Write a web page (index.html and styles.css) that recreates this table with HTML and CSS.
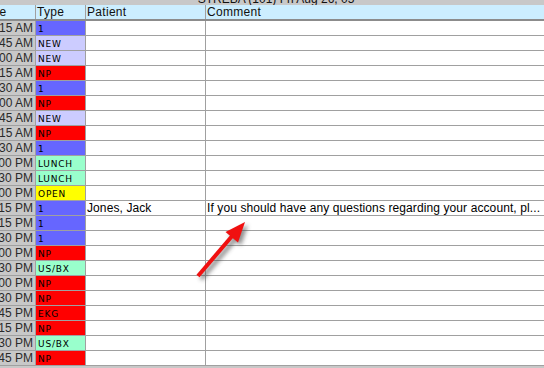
FILE: index.html
```html
<!DOCTYPE html>
<html>
<head>
<meta charset="utf-8">
<link rel="stylesheet" href="styles.css">
</head>
<body>
<div class="screen">
  <div class="title"><span>STREBA (101) Fri Aug 26, 05</span></div>
  <div class="table">
    <div class="row head">
      <div class="c time-h">Time</div>
      <div class="c">Type</div>
      <div class="c">Patient</div>
      <div class="c">Comment</div>
    </div>
    <div class="row"><div class="c time"><span>8:15 AM</span></div><div class="c type t-one">1</div><div class="c"></div><div class="c"></div></div>
    <div class="row"><div class="c time"><span>8:45 AM</span></div><div class="c type t-new">NEW</div><div class="c"></div><div class="c"></div></div>
    <div class="row"><div class="c time"><span>9:00 AM</span></div><div class="c type t-new">NEW</div><div class="c"></div><div class="c"></div></div>
    <div class="row"><div class="c time"><span>9:15 AM</span></div><div class="c type t-np">NP</div><div class="c"></div><div class="c"></div></div>
    <div class="row"><div class="c time"><span>9:30 AM</span></div><div class="c type t-one">1</div><div class="c"></div><div class="c"></div></div>
    <div class="row"><div class="c time"><span>10:00 AM</span></div><div class="c type t-np">NP</div><div class="c"></div><div class="c"></div></div>
    <div class="row"><div class="c time"><span>10:45 AM</span></div><div class="c type t-new">NEW</div><div class="c"></div><div class="c"></div></div>
    <div class="row"><div class="c time"><span>11:15 AM</span></div><div class="c type t-np">NP</div><div class="c"></div><div class="c"></div></div>
    <div class="row"><div class="c time"><span>11:30 AM</span></div><div class="c type t-one">1</div><div class="c"></div><div class="c"></div></div>
    <div class="row"><div class="c time"><span>12:00 PM</span></div><div class="c type t-lunch">LUNCH</div><div class="c"></div><div class="c"></div></div>
    <div class="row"><div class="c time"><span>12:30 PM</span></div><div class="c type t-lunch">LUNCH</div><div class="c"></div><div class="c"></div></div>
    <div class="row"><div class="c time"><span>1:00 PM</span></div><div class="c type t-open">OPEN</div><div class="c"></div><div class="c"></div></div>
    <div class="row"><div class="c time"><span>1:15 PM</span></div><div class="c type t-one">1</div><div class="c data">Jones, Jack</div><div class="c data">If you should have any questions regarding your account, pl...</div></div>
    <div class="row"><div class="c time"><span>2:15 PM</span></div><div class="c type t-one">1</div><div class="c"></div><div class="c"></div></div>
    <div class="row"><div class="c time"><span>2:30 PM</span></div><div class="c type t-one">1</div><div class="c"></div><div class="c"></div></div>
    <div class="row"><div class="c time"><span>3:00 PM</span></div><div class="c type t-np">NP</div><div class="c"></div><div class="c"></div></div>
    <div class="row"><div class="c time"><span>3:30 PM</span></div><div class="c type t-lunch">US/BX</div><div class="c"></div><div class="c"></div></div>
    <div class="row"><div class="c time"><span>4:00 PM</span></div><div class="c type t-np">NP</div><div class="c"></div><div class="c"></div></div>
    <div class="row"><div class="c time"><span>4:30 PM</span></div><div class="c type t-np">NP</div><div class="c"></div><div class="c"></div></div>
    <div class="row"><div class="c time"><span>4:45 PM</span></div><div class="c type t-np">EKG</div><div class="c"></div><div class="c"></div></div>
    <div class="row"><div class="c time"><span>5:15 PM</span></div><div class="c type t-np">NP</div><div class="c"></div><div class="c"></div></div>
    <div class="row"><div class="c time"><span>5:30 PM</span></div><div class="c type t-lunch">US/BX</div><div class="c"></div><div class="c"></div></div>
    <div class="row"><div class="c time"><span>5:45 PM</span></div><div class="c type t-np">NP</div><div class="c"></div><div class="c"></div></div>
  </div>
  <svg class="arrow" width="544" height="368" viewBox="0 0 544 368">
    <defs>
      <filter id="blur" x="-20%" y="-20%" width="140%" height="140%">
        <feGaussianBlur stdDeviation="2"/>
      </filter>
    </defs>
    <g transform="translate(3,3)" fill="#444" stroke="#444" opacity="0.6" filter="url(#blur)">
      <line x1="198" y1="276" x2="233" y2="235" stroke-width="4.5"/>
      <polygon points="245,222 238,242.5 225.5,232" stroke="none"/>
    </g>
    <g fill="#f01010" stroke="#f01010">
      <line x1="198" y1="276" x2="233" y2="235" stroke-width="4"/>
      <polygon points="245,222 238,242.5 225.5,232" stroke="none"/>
    </g>
  </svg>
</div>
</body>
</html>
```
FILE: styles.css
```css
html, body {
  margin: 0;
  padding: 0;
}
body {
  background: #c8c8c8;
  font-family: "Liberation Sans", Arial, sans-serif;
  font-size: 12px;
  color: #000;
}
.screen {
  position: relative;
  width: 544px;
  height: 368px;
  overflow: hidden;
  background: #c8c8c8;
}
.title {
  height: 5px;
  overflow: hidden;
  display: flex;
  justify-content: center;
  align-items: flex-end;
  padding-left: 8px;
  line-height: 12px;
  font-size: 12px;
  color: #111;
}
.table {
  margin-left: -23px;
  width: 567px;
  display: flex;
  flex-direction: column;
}
.row {
  display: grid;
  grid-template-columns: 59px 50px 120px 1fr;
  height: 15px;
  box-sizing: border-box;
  border-bottom: 1px solid #a0a0a0;
  background: #fff;
}
.row.head {
  height: 16px;
  background: #cceeff;
  border-bottom: 2px solid #8c8c8c;
}
.c {
  box-sizing: border-box;
  border-right: 1px solid #a0a0a0;
  padding-left: 1px;
  white-space: nowrap;
  overflow: hidden;
  line-height: 14px;
  display: flex;
  align-items: center;
}
.row .c:last-child {
  border-right: none;
}
.head .c {
  line-height: 14px;
  color: #111;
  letter-spacing: 0.3px;
}
.data {
  letter-spacing: 0.1px;
}
.time-h {
  padding-left: 2px;
}
.time {
  background: #c8c8c8;
  justify-content: flex-end;
  padding-right: 2px;
  color: #2a2a2a;
}
.type {
  font-family: "DejaVu Sans", Verdana, sans-serif;
  font-size: 9px;
  letter-spacing: 0.8px;
  padding-left: 2px;
  padding-top: 1px;
}
.t-one { background: #6666ff; }
.t-new { background: #ccccff; }
.t-np { background: #ff0000; }
.t-lunch { background: #99ffcc; }
.t-open { background: #ffff00; }
.arrow {
  position: absolute;
  left: 0;
  top: 0;
  pointer-events: none;
}
```
